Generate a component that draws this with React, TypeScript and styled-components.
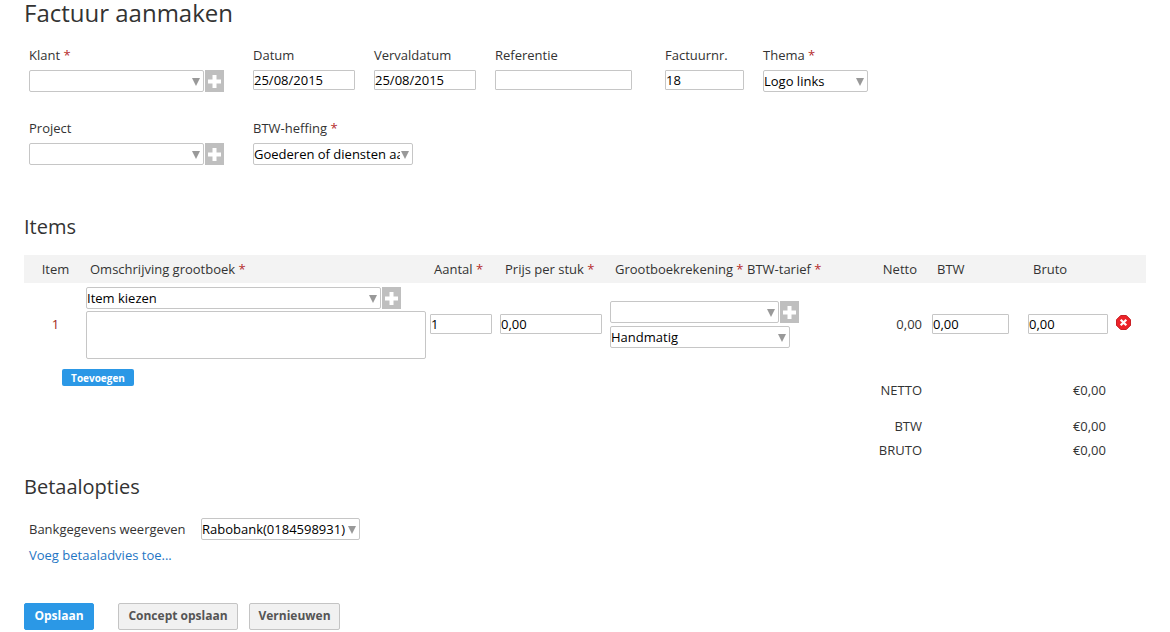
import styled, {createGlobalStyle} from "styled-components";

const Global = createGlobalStyle`
  html, body {
    margin: 0;
    padding: 0;
    background: #fff;
  }
  body {
    font-family: "Open Sans", "Liberation Sans", sans-serif;
    font-size: 13px;
    color: #333;
  }
`

const Page = styled.div`
  width: 1170px;
  height: 632px;
  overflow: hidden;
  box-sizing: border-box;
  padding-left: 24px;
`

const Title = styled.h1`
  margin: 0;
  height: 26px;
  font-size: 24px;
  line-height: 26px;
  font-weight: 400;
  color: #333;
`

const Section = styled.h2<{ $top: number; $bottom?: number }>`
  margin: ${p => p.$top}px 0 ${p => p.$bottom ?? 0}px;
  height: 28px;
  font-size: 20px;
  line-height: 28px;
  font-weight: 400;
  color: #333;
`

const Fields = styled.div`
  padding: 20px 0 0 5px;
  display: flex;
  flex-direction: column;
  gap: 27px;
`

const FieldRow = styled.div`
  display: flex;
`

const Field = styled.div<{ $width: number }>`
  width: ${p => p.$width}px;
  flex: none;
`

const Label = styled.label`
  display: block;
  height: 18px;
  line-height: 18px;
  margin-bottom: 6px;
  white-space: nowrap;
`

const Req = styled.span`
  color: #b52b2b;
  &::before {
    content: "*";
  }
`

const Combo = styled.div`
  display: flex;
  gap: 1px;
`

const SelectBox = styled.div<{ $width: number }>`
  position: relative;
  flex: none;
  width: ${p => p.$width}px;
  height: 22px;
  &::after {
    content: "";
    position: absolute;
    right: 4px;
    top: 8px;
    border-left: 4.5px solid transparent;
    border-right: 4.5px solid transparent;
    border-top: 8px solid #999;
    pointer-events: none;
  }
`

const Select = styled.select`
  appearance: none;
  display: block;
  width: 100%;
  height: 100%;
  box-sizing: border-box;
  border: 1px solid #c6c6c6;
  border-radius: 2px;
  background: #fff;
  padding: 0 12px 0 0;
  margin: 0;
  font: 13px "Open Sans", "Liberation Sans", sans-serif;
  color: #000;
`

const AddButton = styled.button`
  flex: none;
  width: 19px;
  height: 22px;
  padding: 0;
  border: 0;
  background: #bfbfbf;
  display: flex;
  align-items: center;
  justify-content: center;
`

const Input = styled.input<{ $width: number; $top?: number }>`
  display: block;
  width: ${p => p.$width}px;
  height: 20px;
  box-sizing: border-box;
  margin: ${p => p.$top ?? 0}px 0 0;
  padding: 0;
  border: 1px solid #c6c6c6;
  border-radius: 1px;
  background: #fff;
  font: 13px "Open Sans", "Liberation Sans", sans-serif;
  color: #000;
`

const columns = "62px 344px 70px 110px 137px 123px 62px 96px 88px 30px"

const TableHead = styled.div`
  width: 1122px;
  height: 28px;
  background: #f3f3f3;
  display: grid;
  grid-template-columns: ${columns};
  align-items: center;
`

const HeadCell = styled.div<{ $pad?: number; $align?: string }>`
  padding-left: ${p => p.$pad ?? 0}px;
  text-align: ${p => p.$align ?? "left"};
  white-space: nowrap;
`

const NettoHead = styled(HeadCell)`
  padding-right: 15px;
  text-align: right;
`

const ItemRow = styled.div`
  width: 1122px;
  padding-top: 4px;
  display: grid;
  grid-template-columns: ${columns};
  align-items: start;
`

const RowNumber = styled.div`
  margin-top: 28px;
  padding-left: 1px;
  text-align: center;
  line-height: 18px;
  color: #a0281c;
`

const Stack = styled.div`
  display: flex;
  flex-direction: column;
`

const TextArea = styled.textarea`
  display: block;
  width: 340px;
  height: 48px;
  box-sizing: border-box;
  margin: 2px 0 0;
  padding: 0;
  border: 1px solid #c6c6c6;
  border-radius: 2px;
  resize: none;
`

const LedgerCell = styled.div`
  grid-column: span 2;
  margin-top: 14px;
  display: flex;
  flex-direction: column;
  gap: 3px;
`

const NettoValue = styled.div`
  margin-top: 28px;
  padding-right: 10px;
  text-align: right;
  line-height: 18px;
`

const DeleteIcon = styled.svg`
  display: block;
  margin-top: 28px;
`

const Footer = styled.div`
  display: flex;
  justify-content: space-between;
  width: 1082px;
  margin-top: 10px;
  height: 100px;
`

const SmallButton = styled.button`
  margin-left: 38px;
  width: 72px;
  height: 17px;
  padding: 0;
  border: 0;
  border-radius: 2px;
  background: #2b98e6;
  color: #fff;
  font: 700 10px "Open Sans", "Liberation Sans", sans-serif;
`

const Totals = styled.div`
  width: 230px;
  padding-top: 12px;
  display: grid;
  grid-template-columns: 1fr 1fr;
  grid-template-rows: 18px 18px 18px;
  row-gap: 6px;
  justify-items: end;
  line-height: 18px;
`

const TotalLabel = styled.div<{ $gap?: number }>`
  margin-top: ${p => p.$gap ?? 0}px;
  justify-self: start;
  width: 46px;
  text-align: right;
`

const TotalValue = styled.div<{ $gap?: number }>`
  margin-top: ${p => p.$gap ?? 0}px;
`

const BankRow = styled.div`
  padding: 17px 0 0 5px;
  display: flex;
  align-items: center;
`

const BankLabel = styled.div`
  width: 172px;
  white-space: nowrap;
`

const Link = styled.a`
  display: block;
  margin: 6px 0 0 5px;
  line-height: 18px;
  color: #1f76c4;
  text-decoration: none;
`

const Actions = styled.div`
  display: flex;
  margin-top: 39px;
`

const Primary = styled.button`
  width: 70px;
  height: 27px;
  padding: 0 0 2px;
  margin-right: 24px;
  border: 1px solid #2b98e6;
  border-radius: 2px;
  background: #2b98e6;
  color: #fff;
  font: 700 12px "Open Sans", "Liberation Sans", sans-serif;
`

const Secondary = styled.button<{ $width: number }>`
  width: ${p => p.$width}px;
  height: 27px;
  padding: 0 0 2px;
  margin-right: 11px;
  border: 1px solid #c4c4c4;
  border-radius: 2px;
  background: #f1f1f1;
  color: #555;
  font: 700 12px "Open Sans", "Liberation Sans", sans-serif;
`

function Plus() {
    return (
        <svg width="15" height="15" viewBox="0 0 15 15">
            <path d="M5.5 1h4v4.5H14v4H9.5V14h-4V9.5H1v-4h4.5z" fill="#fff"/>
        </svg>
    )
}

function Dropdown({width, value}: { width: number; value?: string }) {
    return (
        <SelectBox $width={width}>
            <Select defaultValue={value ?? ""}>
                <option value={value ?? ""}>{value ?? ""}</option>
            </Select>
        </SelectBox>
    )
}

function AddCombo({width, value}: { width: number; value?: string }) {
    return (
        <Combo>
            <Dropdown width={width} value={value}/>
            <AddButton type="button"><Plus/></AddButton>
        </Combo>
    )
}

export default function App() {
    return (
        <Page>
            <Global/>
            <Title>Factuur aanmaken</Title>
            <Fields>
                <FieldRow>
                    <Field $width={224}>
                        <Label>Klant <Req/></Label>
                        <AddCombo width={175}/>
                    </Field>
                    <Field $width={121}>
                        <Label>Datum</Label>
                        <Input $width={102} defaultValue="25/08/2015"/>
                    </Field>
                    <Field $width={121}>
                        <Label>Vervaldatum</Label>
                        <Input $width={102} defaultValue="25/08/2015"/>
                    </Field>
                    <Field $width={170}>
                        <Label>Referentie</Label>
                        <Input $width={137}/>
                    </Field>
                    <Field $width={98}>
                        <Label>Factuurnr.</Label>
                        <Input $width={79} defaultValue="18"/>
                    </Field>
                    <Field $width={105}>
                        <Label>Thema <Req/></Label>
                        <Dropdown width={105} value="Logo links"/>
                    </Field>
                </FieldRow>
                <FieldRow>
                    <Field $width={224}>
                        <Label>Project</Label>
                        <AddCombo width={175}/>
                    </Field>
                    <Field $width={160}>
                        <Label>BTW-heffing <Req/></Label>
                        <Dropdown width={160} value="Goederen of diensten aan particulieren"/>
                    </Field>
                </FieldRow>
            </Fields>

            <Section $top={48} $bottom={14}>Items</Section>
            <TableHead>
                <HeadCell $pad={1} $align="center">Item</HeadCell>
                <HeadCell $pad={4}>Omschrijving grootboek <Req/></HeadCell>
                <HeadCell $pad={4}>Aantal <Req/></HeadCell>
                <HeadCell $pad={5}>Prijs per stuk <Req/></HeadCell>
                <HeadCell $pad={5}>Grootboekrekening <Req/></HeadCell>
                <HeadCell>BTW-tarief <Req/></HeadCell>
                <NettoHead>Netto</NettoHead>
                <HeadCell $pad={5}>BTW</HeadCell>
                <HeadCell $pad={5}>Bruto</HeadCell>
                <HeadCell/>
            </TableHead>
            <ItemRow>
                <RowNumber>1</RowNumber>
                <Stack>
                    <AddCombo width={295} value="Item kiezen"/>
                    <TextArea/>
                </Stack>
                <Input $width={62} $top={27} defaultValue="1"/>
                <Input $width={102} $top={27} defaultValue="0,00"/>
                <LedgerCell>
                    <AddCombo width={169}/>
                    <Dropdown width={180} value="Handmatig"/>
                </LedgerCell>
                <NettoValue>0,00</NettoValue>
                <Input $width={77} $top={27} defaultValue="0,00"/>
                <Input $width={80} $top={27} defaultValue="0,00"/>
                <DeleteIcon width="15" height="15" viewBox="0 0 16 16">
                    <path d="M5 .5h6L15.5 5v6L11 15.5H5L.5 11V5z" fill="#ec2329" stroke="#c4161c" strokeLinejoin="round"/>
                    <path d="M5 5l6 6M11 5l-6 6" stroke="#fff" strokeWidth="2.4"/>
                </DeleteIcon>
            </ItemRow>
            <Footer>
                <SmallButton type="button">Toevoegen</SmallButton>
                <Totals>
                    <TotalLabel>NETTO</TotalLabel>
                    <TotalValue>€0,00</TotalValue>
                    <TotalLabel $gap={12}>BTW</TotalLabel>
                    <TotalValue $gap={12}>€0,00</TotalValue>
                    <TotalLabel $gap={12}>BRUTO</TotalLabel>
                    <TotalValue $gap={12}>€0,00</TotalValue>
                </Totals>
            </Footer>

            <Section $top={4}>Betaalopties</Section>
            <BankRow>
                <BankLabel>Bankgegevens weergeven</BankLabel>
                <Dropdown width={159} value="Rabobank(0184598931)"/>
            </BankRow>
            <Link href="#">Voeg betaaladvies toe...</Link>
            <Actions>
                <Primary type="button">Opslaan</Primary>
                <Secondary type="button" $width={120}>Concept opslaan</Secondary>
                <Secondary type="button" $width={91}>Vernieuwen</Secondary>
            </Actions>
        </Page>
    )
}
